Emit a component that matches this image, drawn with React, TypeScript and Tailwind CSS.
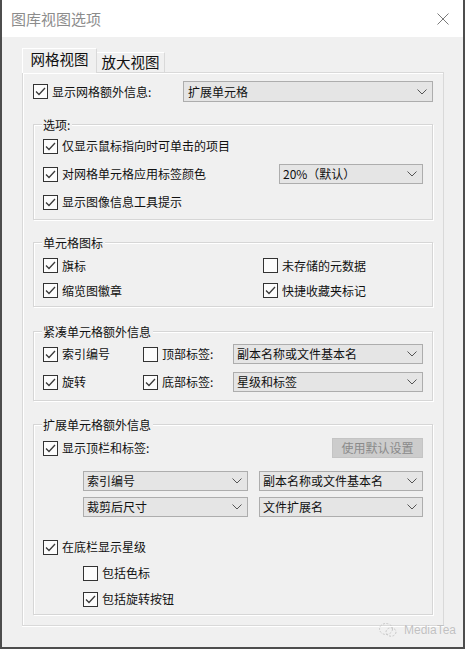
import React from "react";

const Check = ({ checked }: { checked: boolean }) => (
  <span className="w-[15px] h-[15px] shrink-0 border border-[#333333] bg-[#fcfcfc] flex items-center justify-center">
    {checked && (
      <svg width="11" height="9" viewBox="0 0 11 9">
        <polyline points="1,4.5 4,7.5 10,1" fill="none" stroke="#3a3a3a" strokeWidth="1.3" />
      </svg>
    )}
  </span>
);

const CheckItem = ({ checked, label }: { checked: boolean; label: string }) => (
  <div className="flex items-center gap-[4px]">
    <Check checked={checked} />
    <span className="text-[12px] leading-none text-[#111]">{label}</span>
  </div>
);

const Chevron = () => (
  <svg width="10" height="6" viewBox="0 0 10 6">
    <polyline points="0.5,0.5 5,5 9.5,0.5" fill="none" stroke="#555" strokeWidth="1" />
  </svg>
);

const Select = ({ value, className }: { value: string; className: string }) => (
  <div
    className={
      "bg-[#e5e5e5] border border-[#adadad] flex items-center justify-between pl-[3px] pr-[5px] " +
      className
    }
  >
    <span className="text-[12px] leading-none text-[#111]">{value}</span>
    <Chevron />
  </div>
);

const Group = ({
  title,
  className,
  children,
}: {
  title: string;
  className: string;
  children: React.ReactNode;
}) => (
  <div
    className={
      "relative border border-[#d6d6d6] shadow-[inset_1px_1px_0_#ffffff,1px_1px_0_#ffffff] px-[9px] " +
      className
    }
  >
    <span className="absolute left-[8px] top-[-7px] bg-[#f0f0f0] pl-[1px] pr-[2px] text-[12px] leading-[14px] text-[#111]">
      {title}
    </span>
    {children}
  </div>
);

export default function App() {
  return (
    <div
      className="w-[465px] h-[649px] bg-[#f0f0f0] border-l-2 border-r-2 border-b-2 border-[#4d4d4d] flex flex-col relative overflow-hidden"
      style={{ fontFamily: '"Noto Sans CJK SC", "Microsoft YaHei", sans-serif' }}
    >
      {/* Title bar */}
      <div className="h-[37px] bg-white flex items-center justify-between pl-[9px] pr-[14px] shrink-0">
        <span className="text-[15px] leading-none text-[#8c8c8c]">图库视图选项</span>
        <svg width="12" height="12" viewBox="0 0 12 12">
          <line x1="0.5" y1="0.5" x2="11.5" y2="11.5" stroke="#7a7a7a" strokeWidth="1" />
          <line x1="11.5" y1="0.5" x2="0.5" y2="11.5" stroke="#7a7a7a" strokeWidth="1" />
        </svg>
      </div>

      {/* Body */}
      <div className="pl-[20px] pt-[11px] flex flex-col">
        {/* Tabs */}
        <div className="flex items-start h-[24px]">
          <div className="relative z-10 w-[75px] h-[25px] bg-[#f0f0f0] border-l border-t border-r border-white border-r-[#d9d9d9] flex items-center justify-center pb-[3px]">
            <span className="text-[14.5px] leading-none text-[#111]">网格视图</span>
          </div>
          <div className="mt-[4px] w-[68px] h-[20px] bg-[#f0f0f0] border-t border-r border-white border-r-[#d9d9d9] flex items-center justify-center">
            <span className="text-[14.5px] leading-none text-[#111]">放大视图</span>
          </div>
        </div>

        {/* Panel */}
        <div className="w-[422px] border border-[#d9d9d9] shadow-[inset_1px_1px_0_#ffffff,0_1px_0_#ffffff] px-[10px] pt-[8px] pb-[10px] flex flex-col">
          {/* main row */}
          <div className="h-[21px] flex items-center justify-between">
            <div className="flex items-center gap-[4px]">
              <Check checked />
              <span className="text-[12px] leading-none text-[#111]">显示网格额外信息:</span>
            </div>
            <Select value="扩展单元格" className="w-[250px] h-[21px] pl-[4px]" />
          </div>

          {/* 选项 */}
          <Group title="选项:" className="mt-[22px] pt-[7px] pb-[3px]">
            <div className="h-[28px] flex items-center">
              <CheckItem checked label="仅显示鼠标指向时可单击的项目" />
            </div>
            <div className="h-[28px] flex items-center justify-between">
              <CheckItem checked label="对网格单元格应用标签颜色" />
              <Select value="20%（默认）" className="w-[144px] h-[20px]" />
            </div>
            <div className="h-[28px] flex items-center">
              <CheckItem checked label="显示图像信息工具提示" />
            </div>
          </Group>

          {/* 单元格图标 */}
          <Group title="单元格图标" className="mt-[22px] pt-[10px] pb-[3px]">
            <div className="grid grid-cols-[220px_1fr]">
              <div className="h-[25px] flex items-center">
                <CheckItem checked label="旗标" />
              </div>
              <div className="h-[25px] flex items-center">
                <CheckItem checked={false} label="未存储的元数据" />
              </div>
              <div className="h-[25px] flex items-center">
                <CheckItem checked label="缩览图徽章" />
              </div>
              <div className="h-[25px] flex items-center">
                <CheckItem checked label="快捷收藏夹标记" />
              </div>
            </div>
          </Group>

          {/* 紧凑单元格额外信息 */}
          <Group title="紧凑单元格额外信息" className="mt-[24px] pt-[8px] pb-[4px]">
            <div className="h-[28px] flex items-center">
              <div className="w-[100px]">
                <CheckItem checked label="索引编号" />
              </div>
              <div className="w-[90px]">
                <CheckItem checked={false} label="顶部标签:" />
              </div>
              <Select value="副本名称或文件基本名" className="flex-1 h-[20px]" />
            </div>
            <div className="h-[28px] flex items-center">
              <div className="w-[100px]">
                <CheckItem checked label="旋转" />
              </div>
              <div className="w-[90px]">
                <CheckItem checked label="底部标签:" />
              </div>
              <Select value="星级和标签" className="flex-1 h-[20px]" />
            </div>
          </Group>

          {/* 扩展单元格额外信息 */}
          <Group title="扩展单元格额外信息" className="mt-[23px] pt-[9px] pb-[2px]">
            <div className="h-[28px] flex items-center justify-between">
              <CheckItem checked label="显示顶栏和标签:" />
              <div className="w-[91px] h-[20px] bg-[#cccccc] border border-[#c4c4c4] flex items-center justify-center">
                <span className="text-[12px] leading-none text-[#8a8a8a]">使用默认设置</span>
              </div>
            </div>
            <div className="ml-[40px] mt-[9px] grid grid-cols-[165px_164px] gap-x-[11px] gap-y-[6px]">
              <Select value="索引编号" className="h-[20px]" />
              <Select value="副本名称或文件基本名" className="h-[20px]" />
              <Select value="裁剪后尺寸" className="h-[20px]" />
              <Select value="文件扩展名" className="h-[20px]" />
            </div>
            <div className="mt-[17px] h-[26px] flex items-center">
              <CheckItem checked label="在底栏显示星级" />
            </div>
            <div className="ml-[40px] h-[26px] flex items-center">
              <CheckItem checked={false} label="包括色标" />
            </div>
            <div className="ml-[40px] h-[26px] flex items-center">
              <CheckItem checked label="包括旋转按钮" />
            </div>
          </Group>
        </div>
      </div>

      {/* watermark */}
      <div className="absolute left-[376px] top-[622px] flex items-center gap-[6px]">
        <svg width="20" height="16" viewBox="0 0 20 16">
          <ellipse cx="8" cy="7" rx="6.5" ry="5.5" fill="none" stroke="#c8c8c8" strokeWidth="1" strokeDasharray="2 1.5" />
          <ellipse cx="13" cy="10" rx="5" ry="4.2" fill="none" stroke="#c8c8c8" strokeWidth="1" strokeDasharray="2 1.5" />
        </svg>
        <span
          className="text-[12px] leading-none text-[#c0c0c0]"
          style={{ fontFamily: '"Liberation Sans", Arial, sans-serif', textShadow: "0 0 1px #ffffff" }}
        >
          MediaTea
        </span>
      </div>
    </div>
  );
}
